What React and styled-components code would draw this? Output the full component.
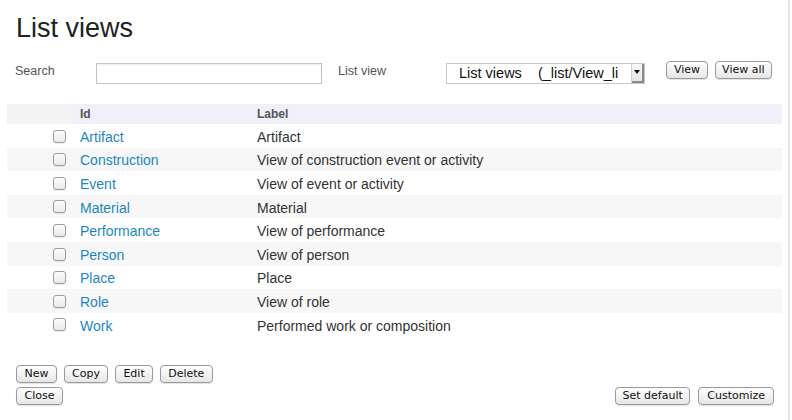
import React from "react";
import styled, { createGlobalStyle } from "styled-components";

const Global = createGlobalStyle`
  html, body { margin: 0; padding: 0; background: #fff; }
  body { font-family: "Liberation Sans", Arial, sans-serif; color: #333; }
`;

const Page = styled.div`
  width: 790px;
  height: 420px;
  border-right: 2px solid #e4e4e4;
  box-sizing: border-box;
  padding: 0 14px 0 7px;
  display: flex;
  flex-direction: column;
  overflow: hidden;
`;

const Title = styled.h1`
  margin: 12px 0 0 9px;
  font-size: 27px;
  font-weight: normal;
  color: #222;
  line-height: 32px;
`;

const SearchBar = styled.div`
  display: flex;
  align-items: center;
  margin-top: 18px;
  height: 22px;
`;

const Label = styled.label`
  font-size: 12.5px;
  color: #555;
  width: ${(p) => p.$w}px;
  margin-left: ${(p) => p.$ml || 0}px;
  position: relative;
  top: -2px;
`;

const TextInput = styled.input`
  width: 226px;
  height: 21px;
  box-sizing: border-box;
  border: 1px solid #c4c4c4;
  box-shadow: inset 0 1px 2px rgba(0,0,0,0.08);
  margin: 0 16px 0 0;
  padding: 0;
`;

const Select = styled.div`
  width: 199px;
  height: 21px;
  box-sizing: border-box;
  border: 1px solid #c8c8c8;
  display: flex;
  align-items: center;
  background: #fff;
  position: relative;
  padding-left: 12px;
`;

const SelectText = styled.span`
  font-family: "Liberation Sans", Arial, sans-serif;
  font-size: 14.5px;
  color: #111;
  white-space: pre;
`;

const SelectArrow = styled.div`
  position: absolute;
  right: 0;
  top: 0;
  width: 13px;
  height: 19px;
  box-sizing: border-box;
  background: linear-gradient(#f8f8f8, #e6e6e6);
  border-left: 1px solid #d0d0d0;
  box-shadow: inset -2px -2px 0 #8a8a8a;
  display: flex;
  align-items: center;
  justify-content: center;
  &::after {
    content: "";
    border-left: 3px solid transparent;
    border-right: 3px solid transparent;
    border-top: 4px solid #111;
    margin: 0 2px 2px 0;
  }
`;

const Button = styled.button`
  font-family: "DejaVu Sans", Verdana, sans-serif;
  font-size: 11px;
  color: #111;
  height: 18px;
  padding: 0 ${(p) => p.$px ?? 7.5}px;
  border: 1px solid #9a9a9a;
  border-radius: 4px;
  background: linear-gradient(#ffffff, #f2f2f2 50%, #e6e6e6);
  box-shadow: 0 1px 1px rgba(0,0,0,0.12);
  line-height: 16px;
  margin: 0;
  cursor: default;
`;

const ButtonGroup = styled.div`
  display: flex;
  gap: ${(p) => p.$gap || 6.5}px;
  margin-left: ${(p) => p.$ml || 0}px;
  position: relative;
  top: ${(p) => p.$top || 0}px;
`;

const Table = styled.table`
  border-collapse: collapse;
  width: 775px;
  margin-top: 20px;
  font-size: 14px;
`;

const Th = styled.th`
  height: 20px;
  padding: 0 0 0 ${(p) => p.$pl || 0}px;
  text-align: left;
  font-size: 12px;
  font-weight: bold;
  color: #555;
  background: ${(p) => (p.$first ? "#f4f4f4" : "#eff0f8")};
  width: ${(p) => (p.$w ? p.$w + "px" : "auto")};
  box-sizing: border-box;
`;

const Tr = styled.tr`
  height: 23.6px;
  background: ${(p) => (p.$alt ? "#f7f7f7" : "#fff")};
`;

const Td = styled.td`
  padding: 2px 0 0 ${(p) => p.$pl || 0}px;
  color: #333;
  vertical-align: middle;
`;

const Check = styled.span`
  display: inline-block;
  width: 11px;
  height: 11px;
  border: 1px solid #9d9d9d;
  border-radius: 3px;
  background: linear-gradient(#fcfcfc, #e9e9e9);
  box-shadow: 0 1px 1px rgba(0,0,0,0.08);
  margin-left: 46px;
  vertical-align: middle;
  position: relative;
  top: -2px;
`;

const Link = styled.a`
  color: #1c87bf;
  text-decoration: none;
`;

const Footer = styled.div`
  margin-top: 29px;
  display: flex;
  flex-direction: column;
  gap: 4px;
`;

const FooterRow = styled.div`
  display: flex;
  justify-content: space-between;
  align-items: flex-end;
`;

const rows = [
  ["Artifact", "Artifact"],
  ["Construction", "View of construction event or activity"],
  ["Event", "View of event or activity"],
  ["Material", "Material"],
  ["Performance", "View of performance"],
  ["Person", "View of person"],
  ["Place", "Place"],
  ["Role", "View of role"],
  ["Work", "Performed work or composition"],
];

export default function App() {
  return (
    <>
      <Global />
      <Page>
        <Title>List views</Title>
        <SearchBar>
          <Label $w={81} $ml={8}>Search</Label>
          <TextInput type="text" />
          <Label $w={108}>List view</Label>
          <Select>
            <SelectText>{"List views    (_list/View_li"}</SelectText>
            <SelectArrow />
          </Select>
          <ButtonGroup $ml={21} $gap={7} $top={-3}>
            <Button $px={7}>View</Button>
            <Button $px={6}>View all</Button>
          </ButtonGroup>
        </SearchBar>
        <Table>
          <thead>
            <tr>
              <Th $first $w={65}></Th>
              <Th $pl={8} $w={185}>Id</Th>
              <Th>Label</Th>
            </tr>
          </thead>
          <tbody>
            {rows.map(([id, label], i) => (
              <Tr key={id} $alt={i % 2 === 1}>
                <Td><Check /></Td>
                <Td $pl={8}><Link href="#">{id}</Link></Td>
                <Td>{label}</Td>
              </Tr>
            ))}
          </tbody>
        </Table>
        <Footer>
          <ButtonGroup $ml={9}>
            <Button>New</Button>
            <Button>Copy</Button>
            <Button>Edit</Button>
            <Button>Delete</Button>
          </ButtonGroup>
          <FooterRow>
            <ButtonGroup $ml={9}>
              <Button>Close</Button>
            </ButtonGroup>
            <ButtonGroup $gap={8}>
              <Button $px={6.5}>Set default</Button>
              <Button $px={8}>Customize</Button>
            </ButtonGroup>
          </FooterRow>
        </Footer>
      </Page>
    </>
  );
}
